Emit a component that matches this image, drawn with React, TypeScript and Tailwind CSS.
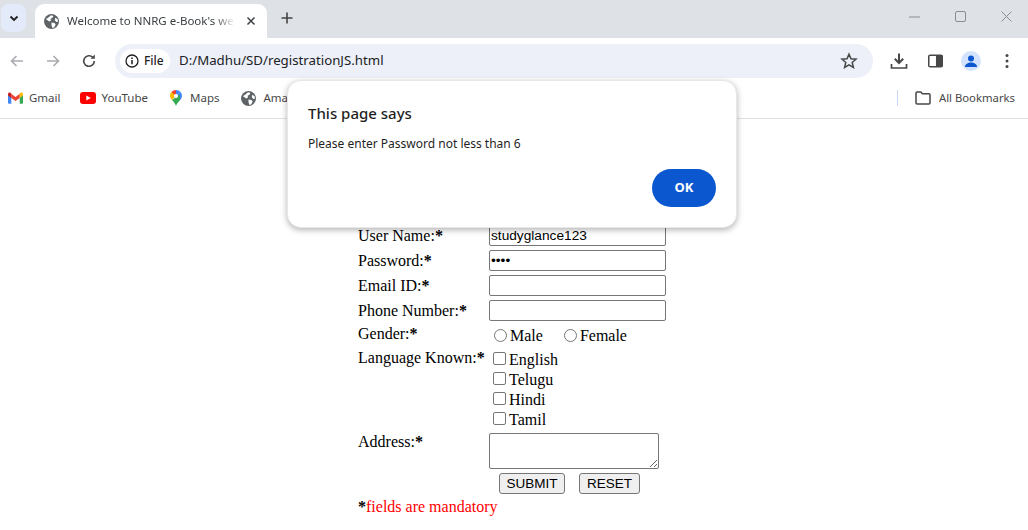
import React from "react";

const uiFont = "font-['Noto_Sans','Open_Sans',sans-serif]";

// Small round globe used for the tab favicon and bookmark
const Globe = ({ className }: { className: string }) => (
  <svg viewBox="0 0 16 16" className={className}>
    <circle cx="8" cy="8" r="8" fill="#5f6368" />
    <path
      d="M2 5.5 5 3.5 7.5 1.2 10 2 9 4 7 5 7.5 7 5.5 8 3.5 6.5ZM8 9l3 .5 1.5 1.5-1.5 3-2 1-1-3ZM12 4l2.5 1.5.5 2.5-2 .5-1.5-2Z"
      fill="#fff"
    />
  </svg>
);

const GmailIcon = () => (
  <svg viewBox="0 0 16 12" className="w-[15px] h-[12px]">
    <path d="M0 2.5V11a1 1 0 0 0 1 1h2.5V5.5Z" fill="#4285f4" />
    <path d="M16 2.5V11a1 1 0 0 1-1 1h-2.5V5.5Z" fill="#34a853" />
    <path d="M3.5 6V1.5L8 5l4.5-3.500V6L8 9.300Z" fill="#ea4335" />
    <path d="M0 1.800C0 .4 1.600-.4 2.600.4L3.500 1.100V6L0 3.400Z" fill="#c5221f" />
    <path d="M16 1.800C16 .4 14.400-.4 13.400.4L12.500 1.100V6L16 3.400Z" fill="#fbbc04" />
  </svg>
);

const YouTubeIcon = () => (
  <svg viewBox="0 0 16 12" className="w-[16px] h-[12px]">
    <rect width="16" height="12" rx="3" fill="#ff0000" />
    <path d="M6.300 3.500 10.800 6 6.300 8.500Z" fill="#fff" />
  </svg>
);

const MapsIcon = () => (
  <svg viewBox="0 0 12 16" className="w-[12px] h-[16px]">
    <path d="M6 0a6 6 0 0 1 4.600 2.100L6 6Z" fill="#4285f4" />
    <path d="M1.400 2.100A6 6 0 0 1 6 0L6 6 3.500 8Z" fill="#ea4335" />
    <path d="M.0 6c0-1.500.5-2.900 1.400-3.900L6 6 2 10C.8 8.700 0 7.400 0 6Z" fill="#fbbc04" />
    <path d="M10.600 2.100A6 6 0 0 1 12 6c0 1.500-.9 2.900-2 4.200L6 6Z" fill="#4285f4" />
    <path d="M2 10 10 4.500 10 10.200C8.400 12 6.800 13.500 6 16 5.300 13.700 3.500 11.700 2 10Z" fill="#34a853" />
    <circle cx="6" cy="6" r="2.100" fill="#fff" />
  </svg>
);

const Bookmark = ({ icon, label, gap }: { icon: React.ReactNode; label: string; gap: string }) => (
  <div className={`flex items-center ${gap}`}>
    {icon}
    <span className="text-[11.5px] text-[#474747]">{label}</span>
  </div>
);

const TextRow = ({ label, value, type = "text" }: { label: string; value?: string; type?: string }) => (
  <div className="grid grid-cols-[131px_1fr] h-[25px] items-center">
    <span>
      {label}:<span className="font-bold">*</span>
    </span>
    <input
      readOnly
      type={type}
      defaultValue={value}
      className="w-[177px] h-[21px] border border-[#767676] rounded-[2px] px-[1px] text-[13.7px] font-['Liberation_Sans',sans-serif] bg-white"
    />
  </div>
);

const Check = ({ label }: { label: string }) => (
  <div className="flex items-center h-[20px]">
    <span className="w-[13px] h-[13px] ml-[4px] mr-[3px] mb-[3px] border border-[#767676] rounded-[2px] bg-white" />
    <span>{label}</span>
  </div>
);

const Radio = ({ label, className }: { label: string; className: string }) => (
  <div className={`flex items-center ${className}`}>
    <span className="w-[13px] h-[13px] mr-[3px] mb-[2px] border border-[#767676] rounded-full bg-white" />
    <span>{label}</span>
  </div>
);

const App = () => {
  return (
    <div className="relative w-[1028px] h-[530px] overflow-hidden bg-white">
      {/* TAB STRIP */}
      <div className={`${uiFont} h-[38px] bg-[#dee1e6] flex items-start`}>
        <div className="w-[25px] h-[28px] mt-[4px] ml-[1px] rounded-[8px] bg-[#e3eafa] flex items-center justify-center">
          <svg viewBox="0 0 12 12" className="w-[12px] h-[12px]">
            <path d="M2.500 4.500 6 8l3.500-3.500" fill="none" stroke="#1f1f1f" strokeWidth="1.800" />
          </svg>
        </div>
        <div className="w-[232px] h-[34px] mt-[4px] ml-[9px] rounded-t-[9px] bg-white flex items-center pl-[9px]">
          <Globe className="w-[15px] h-[15px]" />
          <span className="ml-[8px] w-[168px] whitespace-nowrap text-[11.5px] text-[#3c4043] [mask-image:linear-gradient(to_right,black_88%,transparent)]">
            Welcome to NNRG e-Book's we
          </span>
          <svg viewBox="0 0 10 10" className="w-[10px] h-[10px] ml-[11px]">
            <path d="M1.500 1.500l7 7M8.500 1.500l-7 7" stroke="#3c4043" strokeWidth="1.500" />
          </svg>
        </div>
        <svg viewBox="0 0 12 12" className="w-[12px] h-[12px] ml-[14px] mt-[12px]">
          <path d="M6 .5v11M.5 6h11" stroke="#444" strokeWidth="1.600" />
        </svg>
        <div className="flex-1" />
        {/* window controls */}
        <div className="flex items-center gap-[35px] mt-[11px] mr-[16px]">
          <svg viewBox="0 0 11 11" className="w-[11px] h-[11px]">
            <path d="M0 6h11" stroke="#8a8d91" />
          </svg>
          <svg viewBox="0 0 11 11" className="w-[11px] h-[11px]">
            <rect x=".5" y=".5" width="10" height="10" rx="1.500" fill="none" stroke="#8a8d91" />
          </svg>
          <svg viewBox="0 0 11 11" className="w-[11px] h-[11px]">
            <path d="M.5.5l10 10M10.500.5l-10 10" stroke="#8a8d91" />
          </svg>
        </div>
      </div>

      {/* TOOLBAR */}
      <div className={`${uiFont} h-[44px] pt-[2px] bg-white flex items-center`}>
        <svg viewBox="0 0 16 16" className="w-[16px] h-[16px] ml-[9px]">
          <path d="M14 8H3M7.500 3 2.500 8l5 5" fill="none" stroke="#a9abae" strokeWidth="1.600" />
        </svg>
        <svg viewBox="0 0 16 16" className="w-[16px] h-[16px] ml-[20px]">
          <path d="M2 8h11M8.500 3l5 5-5 5" fill="none" stroke="#a9abae" strokeWidth="1.600" />
        </svg>
        <svg viewBox="0 0 16 16" className="w-[16px] h-[16px] ml-[20px]">
          <path d="M13.300 8a5.300 5.300 0 1 1-1.500-3.700" fill="none" stroke="#474747" strokeWidth="1.600" />
          <path d="M13.800 1.500v4.300H9.500Z" fill="#474747" />
        </svg>
        <div className="w-[758px] h-[34px] ml-[18px] rounded-full bg-[#edf0f9] flex items-center pl-[5px]">
          <div className="h-[24px] w-[50px] rounded-full bg-white flex items-center pl-[5px]">
            <svg viewBox="0 0 14 14" className="w-[14px] h-[14px]">
              <circle cx="7" cy="7" r="6" fill="none" stroke="#1f1f1f" strokeWidth="1.300" />
              <path d="M7 6v4.200M7 3.500v1.400" stroke="#1f1f1f" strokeWidth="1.500" />
            </svg>
            <span className="ml-[5px] text-[12px] font-medium text-[#1f1f1f]">File</span>
          </div>
          <span className="ml-[9px] text-[13.25px] text-[#202124]">D:/Madhu/SD/registrationJS.html</span>
          <div className="flex-1" />
          <svg viewBox="0 0 18 18" className="w-[18px] h-[18px] mr-[15px]">
            <path
              d="M9 2.200 11 6.800l5 .4-3.800 3.300 1.200 4.900L9 12.800l-4.400 2.600 1.200-4.900L2 7.200l5-.4Z"
              fill="none"
              stroke="#474747"
              strokeWidth="1.500"
            />
          </svg>
        </div>
        <svg viewBox="0 0 18 18" className="w-[18px] h-[18px] ml-[17px]">
          <path d="M9 1.500v9M4.800 6.800 9 11l4.200-4.200" fill="none" stroke="#474747" strokeWidth="2" />
          <path d="M1.500 12v4h15v-4" fill="none" stroke="#474747" strokeWidth="1.700" />
        </svg>
        <svg viewBox="0 0 16 14" className="w-[15px] h-[14px] ml-[20px]">
          <rect x=".8" y=".8" width="14.400" height="12.400" rx="1.500" fill="none" stroke="#474747" strokeWidth="1.600" />
          <rect x="8.500" y="1" width="7" height="12" fill="#474747" />
        </svg>
        <div className="w-[20px] h-[20px] ml-[18px] rounded-full bg-[#d3e3fd] flex items-center justify-center">
          <svg viewBox="0 0 14 14" className="w-[14px] h-[14px]">
            <circle cx="7" cy="4.500" r="3" fill="#0b57d0" />
            <path d="M1 13c0-3 3-4.500 6-4.500s6 1.500 6 4.500Z" fill="#0b57d0" />
          </svg>
        </div>
        <svg viewBox="0 0 4 16" className="w-[4px] h-[16px] ml-[24px]">
          <circle cx="2" cy="2.500" r="1.500" fill="#474747" />
          <circle cx="2" cy="8" r="1.500" fill="#474747" />
          <circle cx="2" cy="13.500" r="1.500" fill="#474747" />
        </svg>
      </div>

      {/* BOOKMARKS */}
      <div className={`${uiFont} h-[37px] bg-white border-b border-[#dfe1e5] flex items-center pl-[8px] pb-[4px]`}>
        <Bookmark icon={<GmailIcon />} label="Gmail" gap="gap-[6px]" />
        <div className="ml-[19px]">
          <Bookmark icon={<YouTubeIcon />} label="YouTube" gap="gap-[6px]" />
        </div>
        <div className="ml-[22px]">
          <Bookmark icon={<MapsIcon />} label="Maps" gap="gap-[8px]" />
        </div>
        <div className="ml-[22px]">
          <Bookmark icon={<Globe className="w-[15px] h-[15px]" />} label="Amazon" gap="gap-[7px]" />
        </div>
        <div className="flex-1" />
        <div className="w-[1px] h-[16px] bg-[#c7d9f5]" />
        <svg viewBox="0 0 16 14" className="w-[16px] h-[14px] ml-[17px]">
          <path d="M1 2.200C1 1.500 1.500 1 2.200 1h3.600l1.600 1.800h6.400c.7 0 1.200.5 1.200 1.200v7.800c0 .7-.5 1.200-1.200 1.200H2.200C1.500 13 1 12.500 1 11.800Z" fill="none" stroke="#474747" strokeWidth="1.500" />
        </svg>
        <span className="ml-[8px] mr-[13px] text-[11.3px] text-[#474747]">All Bookmarks</span>
      </div>

      {/* PAGE FORM */}
      <div className="pl-[358px] pt-[104px] font-['Liberation_Serif',serif] text-[16px] leading-[18px] text-black">
        <TextRow label="User Name" value="studyglance123" />
        <TextRow label="Password" value="abcd" type="password" />
        <TextRow label="Email ID" />
        <TextRow label="Phone Number" />
        <div className="grid grid-cols-[131px_1fr] h-[24px] mt-[1px]">
          <span className="mt-[1px]">
            Gender:<span className="font-bold">*</span>
          </span>
          <div className="flex ml-[5px]">
            <Radio label="Male" className="" />
            <Radio label="Female" className="ml-[21px]" />
          </div>
        </div>
        <div className="grid grid-cols-[131px_1fr] mt-[1px]">
          <span>
            Language Known:<span className="font-bold">*</span>
          </span>
          <div className="mt-[1px]">
            <Check label="English" />
            <Check label="Telugu" />
            <Check label="Hindi" />
            <Check label="Tamil" />
          </div>
        </div>
        <div className="grid grid-cols-[131px_1fr] mt-[3px]">
          <span>
            Address:<span className="font-bold">*</span>
          </span>
          <textarea
            readOnly
            className="block w-[170px] h-[36px] border border-[#767676] rounded-[2px] bg-white"
          />
        </div>
        <div className="flex pl-[141px] mt-[4px] gap-[14px] font-['Liberation_Sans',sans-serif] text-[13.5px]">
          <button className="w-[66px] h-[21px] border border-[#767676] rounded-[3px] bg-[#efefef]">SUBMIT</button>
          <button className="w-[61px] h-[21px] border border-[#767676] rounded-[3px] bg-[#efefef]">RESET</button>
        </div>
        <div className="mt-[4px]">
          <span className="font-bold">*</span>
          <span className="text-[#ff0000]">fields are mandatory</span>
        </div>
      </div>

      {/* ALERT DIALOG */}
      <div
        className={`${uiFont} absolute left-[287px] top-[80px] w-[450px] h-[148px] rounded-[14px] bg-white border border-[#e8e8e8] shadow-[0_2px_6px_rgba(0,0,0,0.3)] pl-[20px] pr-[20px] pt-[22px]`}
      >
        <div className="text-[15px] leading-[20px] font-medium text-[#1f1f1f]">This page says</div>
        <div className="mt-[12px] text-[12px] leading-[18px] text-[#1f1f1f]">Please enter Password not less than 6</div>
        <div className="flex justify-end mt-[16px]">
          <button className="w-[64px] h-[38px] rounded-full bg-[#0b57d0] text-white text-[13px] font-bold">OK</button>
        </div>
      </div>
    </div>
  );
};

export default App;
